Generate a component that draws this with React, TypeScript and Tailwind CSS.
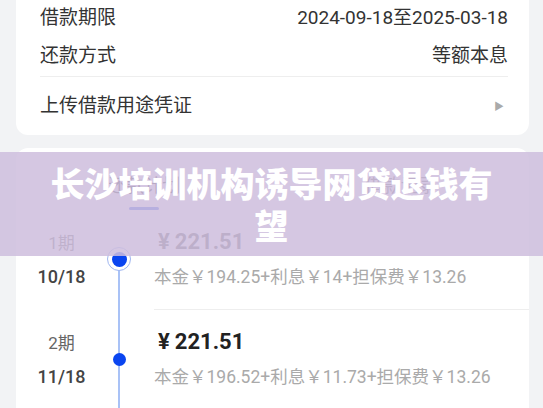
import React from "react";

const font = { fontFamily: 'Roboto, "Noto Sans CJK SC", sans-serif' };

function InfoRow({ label, value, h }: { label: string; value: string; h: string }) {
  return (
    <div className={`flex items-center justify-between ${h}`}>
      <span className="text-[19px] text-[#333]">{label}</span>
      <span className="text-[19px] text-[#333]">{value}</span>
    </div>
  );
}

function PlanRow({
  period,
  date,
  amount,
  detail,
  first,
  pastTone,
}: {
  period: string;
  date: string;
  amount: string;
  detail: string;
  first?: boolean;
  pastTone?: boolean;
}) {
  return (
    <div className="flex h-[100px]">
      <div className="flex w-[91px] flex-col items-center justify-center gap-[12px]">
        <span className="text-[17px] leading-[22px] text-[#666]">{period}</span>
        <span className="text-[18px] font-medium leading-[22px] text-[#444]">{date}</span>
      </div>
      <div className="relative flex w-[24px] justify-center">
        <div
          className={`absolute w-[2px] bg-[#a9c2f6] ${first ? "top-[50px] bottom-0" : "top-0 bottom-0"}`}
        />
        {first ? (
          <div className="absolute top-[37px] flex h-[24px] w-[24px] items-center justify-center rounded-full border-[1.5px] border-[#9fb6f0] bg-white">
            <div className="h-[15px] w-[15px] rounded-full bg-[#0a45f0]" />
          </div>
        ) : (
          <div className="absolute top-[43px] h-[13px] w-[13px] rounded-full bg-[#0a45f0]" />
        )}
      </div>
      <div className="ml-[23px] flex flex-1 flex-col justify-center gap-[12px] border-b border-[#eeeeee] pb-[2px]">
        <span
          className={`flex items-baseline text-[22px] font-bold leading-[24px] ${pastTone ? "text-[#555]" : "text-[#222]"}`}
        >
          <span className="mr-[5px] pl-[4px]">¥</span>
          {amount}
        </span>
        <span className="text-[17.5px] leading-[22px] text-[#aaaaaa]">{detail}</span>
      </div>
    </div>
  );
}

export default function App() {
  return (
    <div className="relative h-[408px] w-[543px] overflow-hidden bg-[#f2f3f5]" style={font}>
      <div className="pl-[16px] pr-[14px]">
        <div className="rounded-b-[12px] bg-white pl-[24px] pr-[21px]">
          <InfoRow label="借款期限" value="2024-09-18至2025-03-18" h="h-[36px]" />
          <InfoRow label="还款方式" value="等额本息" h="h-[40px]" />
          <div className="border-t border-[#eeeeee]" />
          <div className="flex h-[58px] items-center justify-between">
            <span className="text-[19px] text-[#333]">上传借款用途凭证</span>
            <span className="pr-[4px] text-[10px] text-[#aaa]">▶</span>
          </div>
        </div>

        <div className="mt-[13px] rounded-t-[12px] bg-white">
          <div className="flex h-[62px] items-stretch">
            <div className="flex flex-1 flex-col items-center justify-end">
              <span className="text-[18px] text-[#333]">还款计划</span>
              <div className="mt-[8px] h-[3px] w-[30px] rounded-full bg-[#2f54eb]" />
            </div>
            <div className="flex flex-1 flex-col items-center justify-end">
              <span className="text-[18px] text-[#666]">借款记录</span>
              <div className="mt-[8px] h-[3px] w-[30px]" />
            </div>
          </div>
          <PlanRow
            first
            pastTone
            period="1期"
            date="10/18"
            amount="221.51"
            detail="本金￥194.25+利息￥14+担保费￥13.26"
          />
          <PlanRow
            period="2期"
            date="11/18"
            amount="221.51"
            detail="本金￥196.52+利息￥11.73+担保费￥13.26"
          />
        </div>
      </div>

      <div className="absolute left-0 right-0 top-[152px] flex h-[104px] items-center justify-center bg-[rgba(206,190,221,0.86)] px-[40px]">
        <p
          className="text-center text-[34px] font-black leading-[42px] text-white"
          style={{ fontFamily: '"Noto Sans CJK SC", sans-serif' }}
        >
          长沙培训机构诱导网贷退钱有望
        </p>
      </div>
    </div>
  );
}
